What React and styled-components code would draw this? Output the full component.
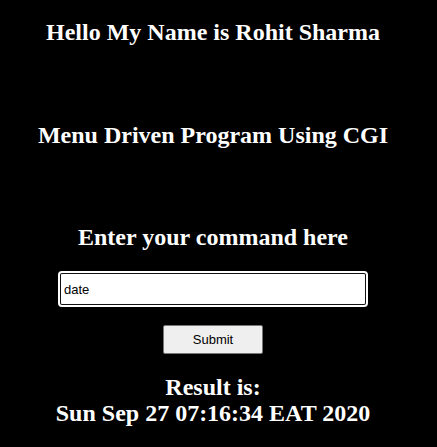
import React from 'react';
import styled, { createGlobalStyle } from 'styled-components';

const GlobalStyle = createGlobalStyle`
	html, body {
		background: #000;
	}
	body {
		margin: 8px;
		font-family: "Liberation Serif", "Times New Roman", serif;
		color: #fff;
	}
`;

const Page = styled.div`
	width: 410px;
	display: flex;
	flex-direction: column;
	align-items: center;
`;

const Heading = styled.h2`
	margin: ${(p) => p.$top}px 0 0;
	font-size: 24px;
	font-weight: bold;
	line-height: 27px;
	text-align: center;
	white-space: nowrap;
`;

const CommandForm = styled.form`
	display: flex;
	flex-direction: column;
	align-items: center;
	margin-top: 21px;
`;

const CommandInput = styled.input`
	box-sizing: border-box;
	width: 308px;
	height: 34px;
	padding: 0 3px;
	border: 2px solid #111;
	border-radius: 3px;
	outline: 2px solid #fff;
	outline-offset: -1px;
	background: #fff;
	font-family: "Liberation Sans", Arial, sans-serif;
	font-size: 13px;
	color: #000;
`;

const SubmitButton = styled.button`
	box-sizing: border-box;
	margin-top: 19px;
	width: 100px;
	height: 29px;
	border: 1px solid #767676;
	border-radius: 2px;
	background: #efefef;
	font-family: "Liberation Sans", Arial, sans-serif;
	font-size: 13px;
	color: #000;
`;

const Result = styled.div`
	margin-top: 20px;
	font-size: 24px;
	font-weight: bold;
	line-height: 26px;
	text-align: center;
	white-space: nowrap;
`;

function App() {
	return (
		<>
			<GlobalStyle />
			<Page>
				<Heading $top={11}>Hello My Name is Rohit Sharma</Heading>
				<Heading $top={76}>Menu Driven Program Using CGI</Heading>
				<Heading $top={75}>Enter your command here</Heading>
				<CommandForm onSubmit={(e) => e.preventDefault()}>
					<CommandInput type='text' defaultValue='date' />
					<SubmitButton type='submit'>Submit</SubmitButton>
				</CommandForm>
				<Result>
					Result is:
					<br />
					Sun Sep 27 07:16:34 EAT 2020
				</Result>
			</Page>
		</>
	);
}

export default App;
